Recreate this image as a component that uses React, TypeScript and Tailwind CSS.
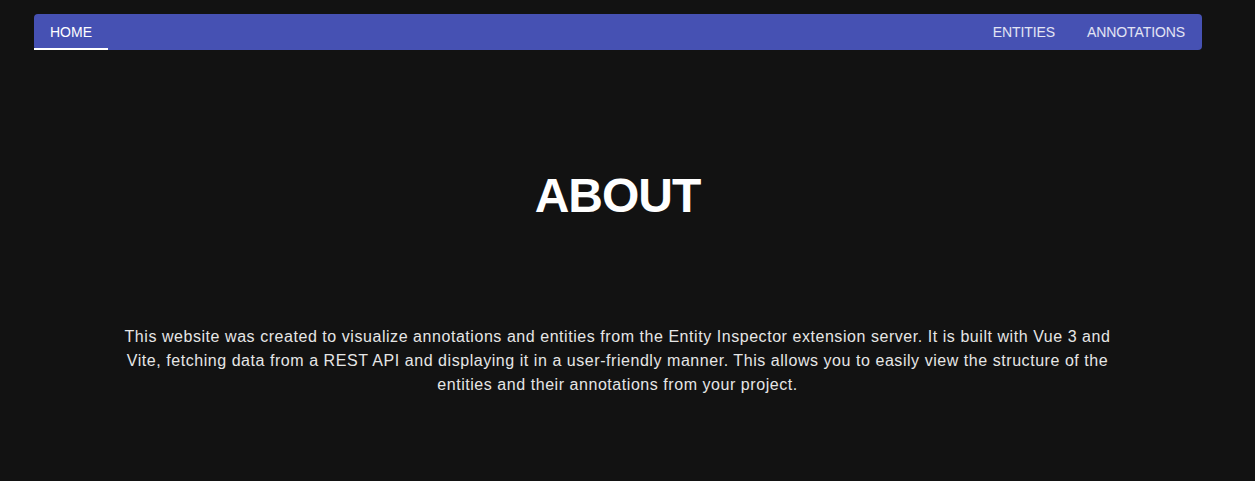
const links = ["ENTITIES", "ANNOTATIONS"];

export default function App() {
  return (
    <div className="min-h-[481px] bg-[#121212] font-['Liberation_Sans',Arial,sans-serif] text-white">
      <div className="pl-[34px] pr-[53px] pt-[14px]">
        <nav className="flex h-[36px] items-stretch justify-between rounded-[4px] bg-[#4651b3]">
          <a className="flex items-center border-b-2 border-white px-4 pt-[2px] text-sm text-white">HOME</a>
          <div className="flex pr-[1px]">
            {links.map((l) => (
              <a key={l} className="flex items-center px-4 text-sm tracking-[-0.1px] text-white/85">
                {l}
              </a>
            ))}
          </div>
        </nav>
      </div>

      <main className="flex flex-col items-center pr-[20px]">
        <h1 className="mt-[122px] text-[48px] font-bold leading-none tracking-[-1px]">ABOUT</h1>
        <p className="mt-[105px] max-w-[1000px] text-center text-base leading-6 tracking-[0.55px] text-[#e6e6e6]">
          This website was created to visualize annotations and entities from the Entity Inspector extension server. It is
          built with Vue 3 and Vite, fetching data from a REST API and displaying it in a user-friendly manner. This allows
          you to easily view the structure of the entities and their annotations from your project.
        </p>
      </main>
    </div>
  );
}
